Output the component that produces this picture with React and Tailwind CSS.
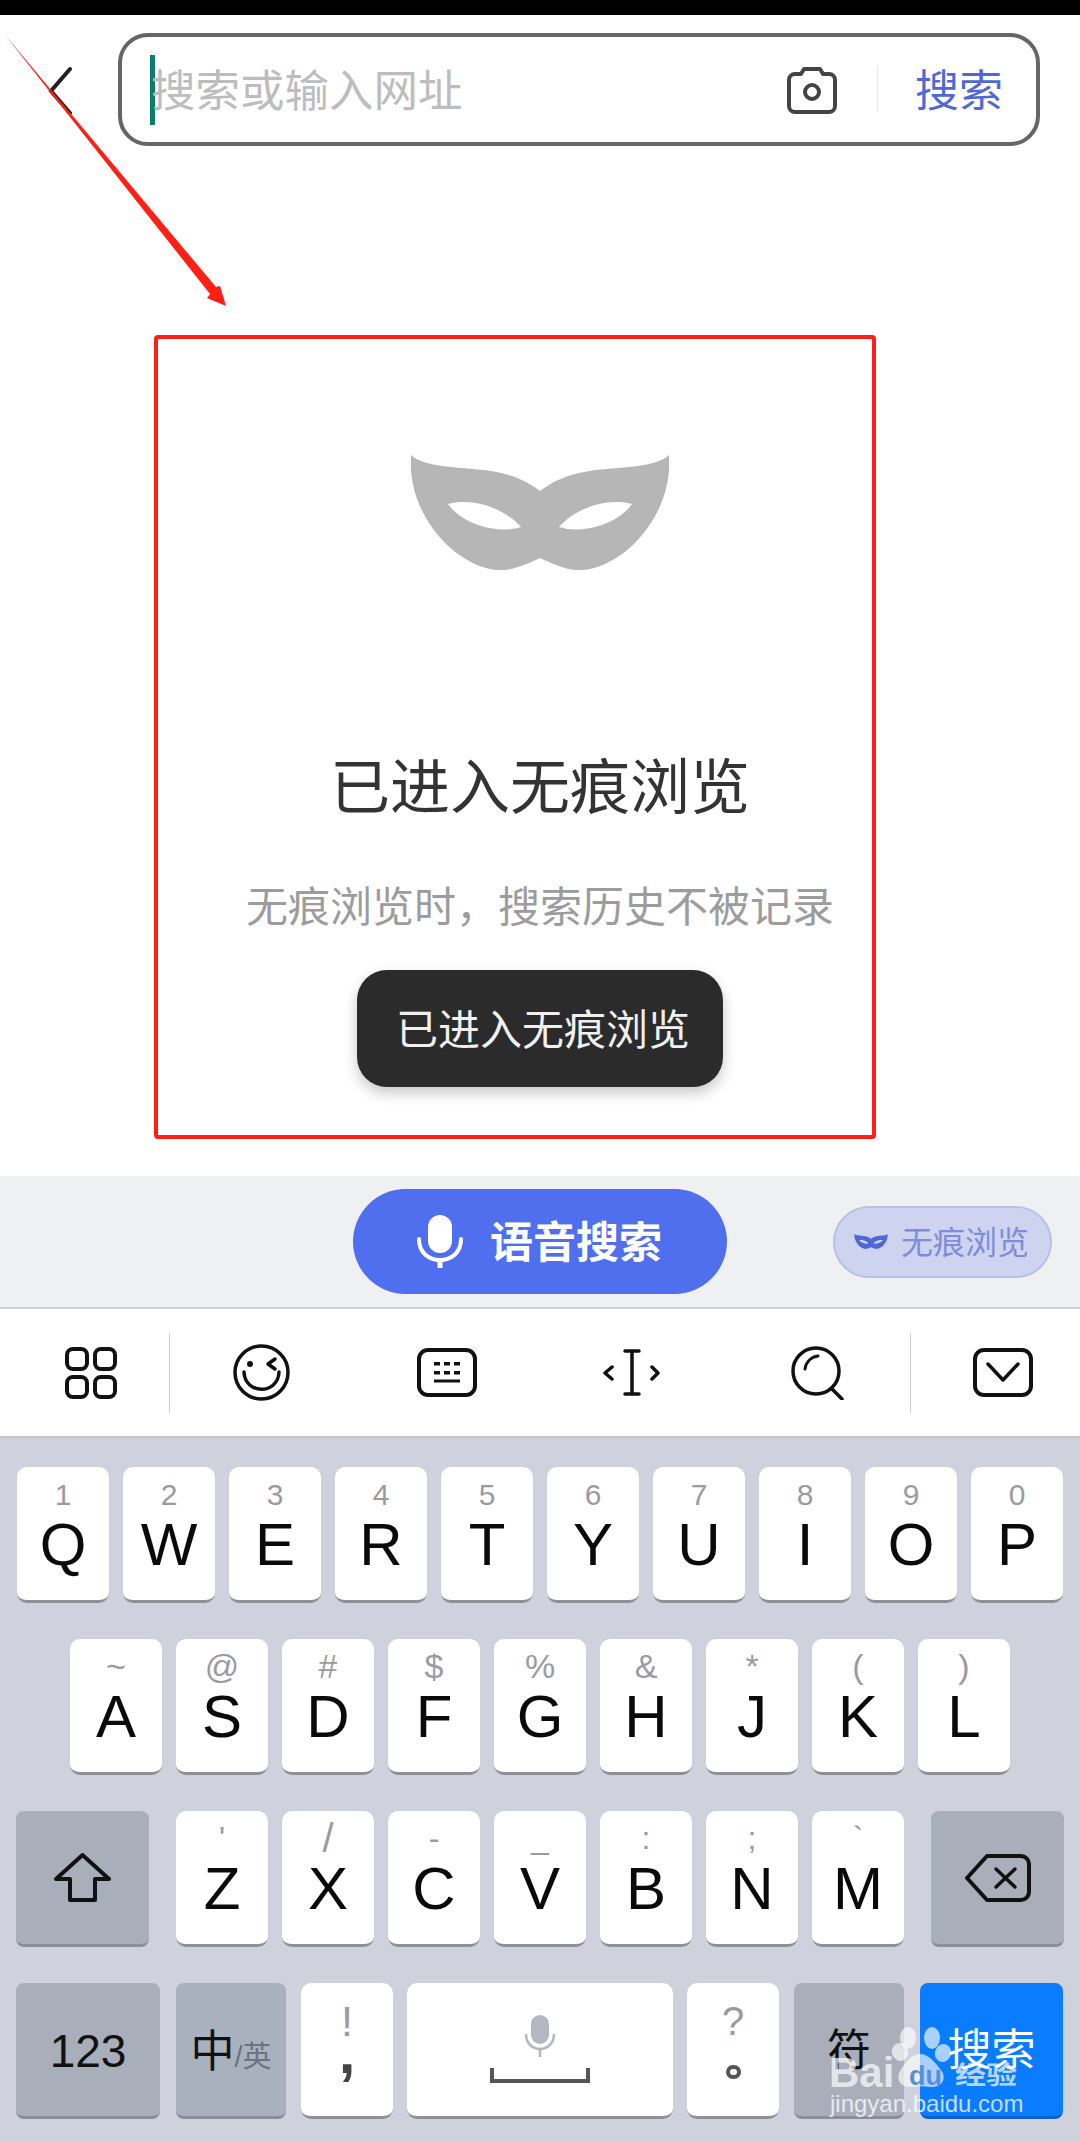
const MASK = "M0 0C6 6 20 10 40 12C70 15 100 14 129 36C158 14 188 15 218 12C238 10 252 6 258 0C260 30 250 62 222 90C200 110 180 116 165 115C152 114 140 108 129 103C118 108 106 114 93 115C78 116 58 110 36 90C8 62-2 30 0 0ZM37 49C50 68 85 80 110 72C95 55 65 42 37 49ZM221 49C193 42 163 55 148 72C173 80 208 68 221 49Z";

function Mask({ className, fill }) {
  return (
    <svg className={className} viewBox="0 0 258 116">
      <path d={MASK} fill={fill} fillRule="evenodd" />
    </svg>
  );
}

function Key({ sub, main, subClass = "text-[30px] leading-[35px]" }) {
  return (
    <div className="w-[92px] h-[136px] bg-white rounded-[10px] border-b-[3px] border-[#8f9097] flex flex-col items-center shrink-0">
      <div className={`mt-[10px] h-[38px] text-[#9b9b9f] ${subClass}`}>{sub}</div>
      <div className="text-[60px] leading-[60px] text-[#0a0a0a]">{main}</div>
    </div>
  );
}

const row1 = [["1","Q"],["2","W"],["3","E"],["4","R"],["5","T"],["6","Y"],["7","U"],["8","I"],["9","O"],["0","P"]];
const row2 = [["~","A"],["@","S"],["#","D"],["$","F"],["%","G"],["&","H"],["*","J"],["(","K"],[")","L"]];
const row3 = [["'","Z"],["/","X"],["-","C"],["_","V"],[":","B"],[";","N"],["`","M"]];

export default function App() {
  return (
    <div className="relative w-[1080px] h-[2142px] overflow-hidden bg-white flex flex-col [font-family:'Liberation_Sans','Noto_Sans_CJK_SC',sans-serif]">
      <div className="h-[15px] bg-black shrink-0" />

      {/* search header */}
      <div className="flex items-center pl-[48px] pt-[18px]">
        <svg width="24" height="48" viewBox="0 0 24 48" fill="none" stroke="#222" strokeWidth="4" strokeLinecap="round">
          <path d="M22 3L3 25L22 47" />
        </svg>
        <div className="ml-[46px] w-[922px] h-[113px] border-[4px] border-[#666] rounded-[30px] flex items-center pl-[28px] pr-[33px]">
          <div className="w-[5px] h-[70px] bg-[#0b7d6c]" />
          <span className="-ml-[4px] mt-[4px] text-[44.5px] leading-[45px] text-[#bdbdbd] whitespace-nowrap">搜索或输入网址</span>
          <svg className="ml-auto" width="50" height="48" viewBox="0 0 50 48" fill="none" stroke="#444" strokeWidth="4">
            <path d="M14 8L17 3H33L36 8H42a6 6 0 0 1 6 6V40a6 6 0 0 1-6 6H8a6 6 0 0 1-6-6V14a6 6 0 0 1 6-6Z" strokeLinejoin="round" />
            <circle cx="25" cy="26" r="7" />
          </svg>
          <div className="ml-[40px] w-px h-[45px] bg-[#e8e8e8]" />
          <span className="ml-[37px] mt-[4px] text-[44px] leading-[44px] text-[#4f68d6] whitespace-nowrap">搜索</span>
        </div>
      </div>

      {/* red highlighted panel */}
      <div className="mt-[189px] ml-[154px] w-[722px] h-[804px] border-[4px] border-[#ff1f14] rounded-[4px] flex flex-col items-center pl-[50px] pt-[116px] shrink-0">
        <Mask className="w-[258px] h-[116px] shrink-0" fill="#b6b6b6" />
        <div className="mt-[188px] text-[60px] leading-[60px] text-[#333] whitespace-nowrap">已进入无痕浏览</div>
        <div className="mt-[68px] text-[42px] leading-[42px] text-[#9c9c9c] whitespace-nowrap">无痕浏览时，搜索历史不被记录</div>
        <div className="mt-[41px] w-[366px] h-[117px] rounded-[30px] bg-[#2b2b2b] shadow-[0_6px_14px_rgba(0,0,0,0.22)] flex items-center justify-center pt-[5px] pl-[6px] text-[42px] leading-[42px] text-[#f0f0f0] whitespace-nowrap">已进入无痕浏览</div>
      </div>

      {/* voice bar */}
      <div className="mt-[37px] h-[133px] bg-[#eff0f1] border-b-[2px] border-[#cfcfcf] flex items-center pl-[353px] shrink-0">
        <div className="w-[374px] h-[105px] rounded-full bg-[#4f6fee] flex items-center pl-[64px]">
          <svg width="46" height="53" viewBox="0 0 46 53" fill="none" stroke="#fff">
            <rect x="11" y="0" width="24" height="38" rx="12" fill="#fff" stroke="none" />
            <path d="M2 24C2 38 12 45 23 45C34 45 44 38 44 24" strokeWidth="4" strokeLinecap="round" />
            <path d="M23 45V53" strokeWidth="5" />
          </svg>
          <span className="ml-[27px] mt-[3px] text-[43px] leading-[43px] font-bold text-white whitespace-nowrap">语音搜索</span>
        </div>
        <div className="ml-[106px] w-[219px] h-[72px] rounded-full bg-[#ced4ef] border-[2px] border-[#b7c0e8] flex items-center pl-[19px]">
          <Mask className="w-[34px] h-[15px] shrink-0" fill="#4f68d6" />
          <span className="ml-[13px] mt-[3px] text-[32px] leading-[32px] text-[#7f8cdb] whitespace-nowrap">无痕浏览</span>
        </div>
      </div>

      {/* keyboard toolbar */}
      <div className="h-[129px] bg-white border-b-[2px] border-[#c4c4c4] flex items-center pl-[65px] shrink-0">
        <svg width="52" height="52" viewBox="0 0 52 52" fill="none" stroke="#111" strokeWidth="4">
          <rect x="2" y="2" width="20" height="20" rx="6" />
          <rect x="30" y="2" width="20" height="20" rx="6" />
          <rect x="2" y="30" width="20" height="20" rx="6" />
          <rect x="30" y="30" width="20" height="20" rx="6" />
        </svg>
        <div className="ml-[52px] w-px h-[80px] bg-[#cfcfcf]" />
        <svg className="ml-[63px]" width="57" height="57" viewBox="0 0 57 57" fill="none" stroke="#111" strokeWidth="3.5" strokeLinecap="round" strokeLinejoin="round">
          <circle cx="28.5" cy="28.5" r="26.5" />
          <circle cx="17" cy="20" r="3" fill="#111" stroke="none" />
          <path d="M42 15L35 20L42 25" />
          <path d="M11 28C12 51 45 51 46 28" />
        </svg>
        <svg className="ml-[127px]" width="60" height="49" viewBox="0 0 60 49" fill="none" stroke="#111" strokeWidth="4">
          <rect x="2" y="2" width="56" height="45" rx="9" />
          <g fill="#111" stroke="none">
            <rect x="17" y="14" width="6" height="3.5" /><rect x="27" y="14" width="6" height="3.5" /><rect x="37" y="14" width="6" height="3.5" />
            <rect x="17" y="23" width="6" height="3.5" /><rect x="27" y="23" width="6" height="3.5" /><rect x="37" y="23" width="6" height="3.5" />
            <rect x="17" y="31.5" width="26" height="3" />
          </g>
        </svg>
        <svg className="ml-[126px]" width="57" height="49" viewBox="0 0 57 49" fill="none" stroke="#111" strokeWidth="3.5" strokeLinecap="round" strokeLinejoin="round">
          <path d="M29 3V46M22 3H36M22 46H36" />
          <path d="M9 19L2 25L9 31M49 19L55 25L49 31" />
        </svg>
        <svg className="ml-[131px]" width="53" height="54" viewBox="0 0 53 54" fill="none" stroke="#111" strokeLinecap="round">
          <circle cx="25" cy="25" r="23" strokeWidth="3.5" />
          <path d="M14 23C15 16 20 11 27 10" strokeWidth="3" />
          <path d="M41 43L51 53" strokeWidth="3.5" />
        </svg>
        <div className="ml-[66px] w-px h-[80px] bg-[#cfcfcf]" />
        <svg className="ml-[62px]" width="60" height="49" viewBox="0 0 60 49" fill="none" stroke="#111" strokeLinecap="round" strokeLinejoin="round">
          <rect x="2" y="2" width="56" height="45" rx="9" strokeWidth="4" />
          <path d="M15 16L30 32L45 16" strokeWidth="3.5" />
        </svg>
      </div>

      {/* keyboard */}
      <div className="flex-1 bg-[#cfd1dc] pt-[29px] flex flex-col gap-[36px] text-[#0a0a0a]">
        <div className="flex gap-[14px] pl-[17px]">
          {row1.map(([s, m]) => <Key key={m} sub={s} main={m} />)}
        </div>
        <div className="flex gap-[14px] pl-[70px]">
          {row2.map(([s, m]) => <Key key={m} sub={s} main={m} subClass="text-[34px] leading-[35px]" />)}
        </div>
        <div className="flex gap-[14px] pl-[16px]">
          <div className="w-[133px] h-[136px] rounded-[8px] bg-[#a9aebb] border-b-[3px] border-[#8a8e9a] flex items-center justify-center mr-[13px]">
            <svg width="57" height="49" viewBox="0 0 57 49" fill="none" stroke="#111" strokeWidth="4" strokeLinejoin="round">
              <path d="M28.5 2L55 26H41V47H16V26H2Z" />
            </svg>
          </div>
          {row3.map(([s, m]) => <Key key={m} sub={s} main={m} subClass={s === "/" ? "text-[40px] leading-[35px]" : "text-[32px] leading-[35px]"} />)}
          <div className="w-[133px] h-[136px] rounded-[8px] bg-[#a9aebb] border-b-[3px] border-[#8a8e9a] flex items-center justify-center ml-[13px]">
            <svg width="66" height="48" viewBox="0 0 66 48" fill="none" stroke="#111" strokeWidth="4" strokeLinejoin="round" strokeLinecap="round">
              <path d="M22 2H56a8 8 0 0 1 8 8V38a8 8 0 0 1-8 8H22L2 24Z" />
              <path d="M31 15L50 33M50 15L31 33" strokeWidth="3.5" />
            </svg>
          </div>
        </div>
        <div className="flex pl-[16px]">
          <div className="w-[144px] h-[136px] rounded-[8px] bg-[#a9aebb] border-b-[3px] border-[#8a8e9a] flex items-center justify-center pt-[3px] text-[46px] leading-[46px] text-[#111]">123</div>
          <div className="ml-[16px] w-[110px] h-[136px] rounded-[8px] bg-[#a8b1bd] border-b-[3px] border-[#8a8e9a] flex items-baseline justify-center pt-[47px]">
            <span className="text-[44px] leading-[44px] text-[#111]">中</span>
            <span className="text-[29px] leading-[29px] text-[#6c7280]">/英</span>
          </div>
          <div className="ml-[15px] w-[92px] h-[136px] rounded-[10px] bg-white border-b-[3px] border-[#8f9097] flex flex-col items-center">
            <div className="mt-[17px] h-[23px] text-[43px] leading-[43px] text-[#9b9b9f]">!</div>
            <div className="text-[60px] leading-[60px] font-bold text-[#444]">,</div>
          </div>
          <div className="ml-[14px] w-[266px] h-[136px] rounded-[10px] bg-white border-b-[3px] border-[#8f9097] flex flex-col items-center pt-[32px]">
            <svg width="32" height="42" viewBox="0 0 32 42" fill="none" stroke="#b4b7c3">
              <rect x="7" y="0" width="18" height="29" rx="9" fill="#b4b7c3" stroke="none" />
              <path d="M2 19C2 29 9 34 16 34C23 34 30 29 30 19" strokeWidth="2.5" />
              <path d="M16 34V42" strokeWidth="2.5" />
            </svg>
            <svg className="mt-[11px]" width="100" height="15" viewBox="0 0 100 15" fill="none" stroke="#555" strokeWidth="4">
              <path d="M2 0V13H98V0" />
            </svg>
          </div>
          <div className="ml-[14px] w-[92px] h-[136px] rounded-[10px] bg-white border-b-[3px] border-[#8f9097] flex flex-col items-center">
            <div className="mt-[17px] h-[65px] text-[40px] leading-[43px] text-[#9b9b9f]">?</div>
            <div className="w-[15px] h-[14px] rounded-full border-[4px] border-[#555]" />
          </div>
          <div className="ml-[15px] w-[110px] h-[136px] rounded-[8px] bg-[#a9aebb] border-b-[3px] border-[#8a8e9a] flex items-center justify-center pt-[3px] text-[44px] leading-[44px] text-[#111]">符</div>
          <div className="ml-[16px] w-[143px] h-[136px] rounded-[8px] bg-[#0a7cff] border-b-[3px] border-[#0a62cc] flex items-center justify-center pt-[3px] text-[44px] leading-[44px] text-white">搜索</div>
        </div>
      </div>

      {/* annotation arrow */}
      <svg className="absolute left-0 top-0 pointer-events-none" width="240" height="320" viewBox="0 0 240 320">
        <path d="M5 35L216 287L220 286L226 306L207 298L210 294Z" fill="#ff1f14" />
      </svg>

      {/* watermark */}
      <span className="absolute left-[829px] top-[2052px] font-bold text-[42px] leading-[42px] text-white/70">Bai</span>
      <svg className="absolute left-[890px] top-[2026px] pointer-events-none" width="62" height="64" viewBox="0 0 62 64" fill="#fff" fillOpacity="0.65">
        <ellipse cx="18" cy="12" rx="8" ry="11" />
        <ellipse cx="42" cy="12" rx="8" ry="11" />
        <ellipse cx="10" cy="26" rx="8" ry="9" transform="rotate(-20 10 26)" />
        <ellipse cx="53" cy="27" rx="8" ry="9" transform="rotate(20 53 27)" />
        <path d="M30 28C40 28 48 40 53 47C56 56 49 62 40 61C34 60 28 60 22 61C13 62 6 56 9 47C13 40 20 28 30 28Z" />
      </svg>
      <span className="absolute left-[909px] top-[2063px] text-[27px] leading-[27px] font-bold text-[#5a8fd8]">du</span>
      <span className="absolute left-[955px] top-[2060px] text-[31px] leading-[31px] font-bold text-white/70 whitespace-nowrap scale-y-[0.8]">经验</span>
      <span className="absolute left-[830px] top-[2092px] text-[24px] leading-[24px] text-white/75 whitespace-nowrap">jingyan.baidu.com</span>
    </div>
  );
}
